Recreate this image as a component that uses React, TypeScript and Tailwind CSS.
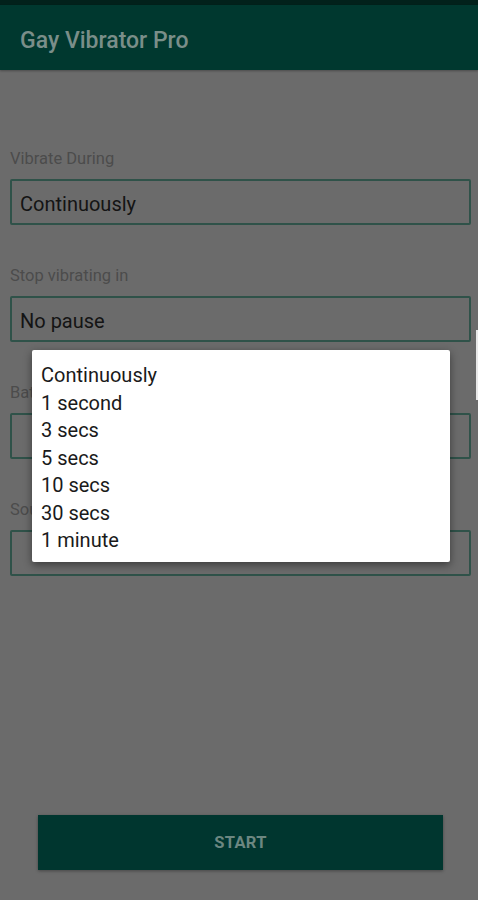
import React from "react";

const OPTIONS = ["Continuously", "1 second", "3 secs", "5 secs", "10 secs", "30 secs", "1 minute"];

const FIELDS = [
  { label: "Vibrate During", value: "Continuously" },
  { label: "Stop vibrating in", value: "No pause" },
  { label: "Battery level", value: "" },
  { label: "Sound", value: "" },
];

function Field({ label, value }: { label: string; value: string }) {
  return (
    <div className="flex flex-col">
      <div className="h-[22px] pt-[1px] text-[16.5px] leading-[22px] text-[#4c4c4c]">{label}</div>
      <div className="mt-[10px] h-[46px] rounded-[2px] border-2 border-[#2f5249] bg-[#6b6b6b] pl-[8px] pt-[3px] flex items-center text-[20px] text-[#141414]">
        {value}
      </div>
    </div>
  );
}

export default function App() {
  return (
    <div
      className="relative w-[478px] h-[900px] overflow-hidden bg-[#6b6b6b] flex flex-col"
      style={{ fontFamily: "Roboto, 'Noto Sans', sans-serif" }}
    >
      <div className="h-[5px] bg-[#02211b]" />
      <div className="h-[65px] bg-[#00382f] flex items-center pl-[20px] pt-[7px] shadow-[0_1px_2px_rgba(0,0,0,0.3)]">
        <span className="text-[23px] font-medium text-[#7a8e89]">Gay Vibrator Pro</span>
      </div>

      <div className="flex flex-col gap-[39px] px-[10px] pr-[7px] pt-[77px]">
        {FIELDS.map((f) => (
          <Field key={f.label} label={f.label} value={f.value} />
        ))}
      </div>

      <div className="mt-auto mb-[30px] mx-[38px] mr-[35px] h-[55px] bg-[#00362f] flex items-center justify-center pt-[2px] shadow-[0_1px_3px_rgba(0,0,0,0.35)]">
        <span className="text-[16.5px] font-bold text-[#6c8781] tracking-[0.3px]">START</span>
      </div>

      {/* dropdown popup */}
      <div className="absolute left-[32px] top-[350px] w-[418px] h-[212px] bg-white rounded-[2px] shadow-[0_3px_8px_rgba(0,0,0,0.45)] pt-[12px] pl-[9px]">
        {OPTIONS.map((o) => (
          <div key={o} className="h-[27.5px] leading-[27.5px] text-[20px] text-[#1a1a1a]">
            {o}
          </div>
        ))}
      </div>

      {/* scroll indicator */}
      <div className="absolute right-0 top-[330px] w-[2px] h-[70px] bg-[#e8e8e8]" />
    </div>
  );
}
